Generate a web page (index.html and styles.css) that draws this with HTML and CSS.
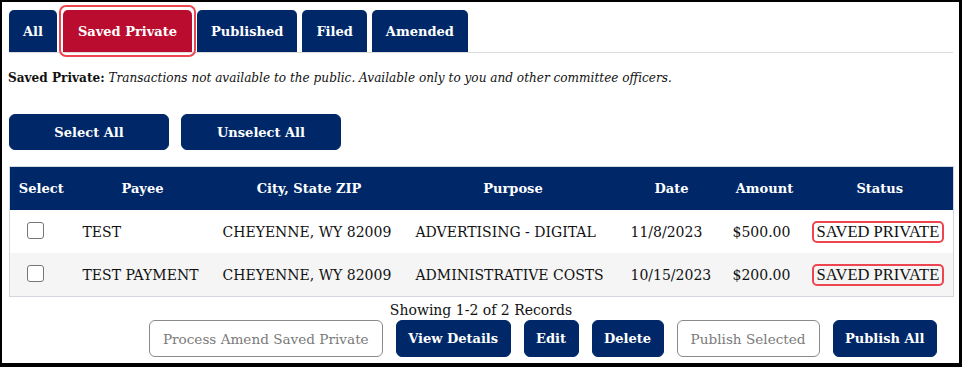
FILE: index.html
```html
<!DOCTYPE html>
<html>
<head>
<meta charset="utf-8">
<link rel="stylesheet" href="styles.css">
</head>
<body>
<div class="frame">
  <nav class="tabs">
    <a class="tab">All</a>
    <a class="tab active">Saved Private</a>
    <a class="tab">Published</a>
    <a class="tab">Filed</a>
    <a class="tab">Amended</a>
  </nav>
  <p class="desc"><b>Saved Private:</b> <i>Transactions not available to the public. Available only to you and other committee officers.</i></p>
  <div class="select-actions">
    <button class="btn btn-wide">Select All</button>
    <button class="btn btn-wide">Unselect All</button>
  </div>
  <table class="grid">
    <colgroup>
      <col class="c-select"><col class="c-payee"><col class="c-city"><col class="c-purpose"><col class="c-date"><col class="c-amount"><col class="c-status">
    </colgroup>
    <thead>
      <tr><th>Select</th><th>Payee</th><th>City, State ZIP</th><th>Purpose</th><th>Date</th><th>Amount</th><th>Status</th></tr>
    </thead>
    <tbody>
      <tr>
        <td class="chk-cell"><span class="chk"></span></td>
        <td>TEST</td>
        <td>CHEYENNE, WY 82009</td>
        <td>ADVERTISING - DIGITAL</td>
        <td>11/8/2023</td>
        <td>$500.00</td>
        <td><span class="badge">SAVED PRIVATE</span></td>
      </tr>
      <tr>
        <td class="chk-cell"><span class="chk"></span></td>
        <td>TEST PAYMENT</td>
        <td>CHEYENNE, WY 82009</td>
        <td>ADMINISTRATIVE COSTS</td>
        <td>10/15/2023</td>
        <td>$200.00</td>
        <td><span class="badge">SAVED PRIVATE</span></td>
      </tr>
    </tbody>
  </table>
  <div class="showing">Showing 1-2 of 2 Records</div>
  <div class="bottom-actions">
    <button class="btn btn-outline">Process Amend Saved Private</button>
    <button class="btn">View Details</button>
    <button class="btn">Edit</button>
    <button class="btn">Delete</button>
    <button class="btn btn-outline">Publish Selected</button>
    <button class="btn">Publish All</button>
  </div>
</div>
</body>
</html>
```

FILE: styles.css
```css
html, body {
  margin: 0;
  padding: 0;
  background: #000;
}
body {
  font-family: "DejaVu Serif", Georgia, serif;
  color: #111;
}
.frame {
  box-sizing: border-box;
  width: 962px;
  height: 367px;
  background: #fff;
  border-style: solid;
  border-color: #000;
  border-width: 2px 3px 4px 2px;
  padding: 8px 6px 0 7px;
}
.tabs {
  display: flex;
  gap: 5px;
  height: 42px;
  border-bottom: 1px solid #dcdcdc;
}
.tab {
  position: relative;
  display: flex;
  align-items: center;
  padding: 0 14px;
  background: #002868;
  color: #fff;
  font-weight: bold;
  font-size: 13px;
  border-radius: 5px 5px 0 0;
}
.tab.active {
  background: #ba0c2f;
  margin-left: 1px;
  padding: 0 15px;
}
.tab.active::after {
  content: "";
  position: absolute;
  left: -4px;
  right: -4px;
  top: -5px;
  bottom: -5px;
  border: 2px solid #ee4650;
  border-radius: 7px;
}
.desc {
  margin: 16px 0 0 -1px;
  font-size: 12.1px;
  line-height: 18px;
}
.desc b { font-weight: bold; }
.select-actions {
  display: flex;
  gap: 12px;
  margin-top: 27px;
}
.btn {
  font-family: "DejaVu Serif", Georgia, serif;
  background: #002868;
  color: #fff;
  border: 1px solid #002868;
  border-radius: 6px;
  height: 37px;
  padding: 0 11.5px;
  font-size: 13px;
  font-weight: bold;
}
.btn-wide {
  width: 160px;
  height: 36px;
}
.btn-outline {
  background: #fff;
  color: #7a7a7a;
  border-color: #8a8a8a;
  font-weight: normal;
  font-size: 13.6px;
  padding: 0 13px;
}
.grid {
  margin-top: 16px;
  width: 944px;
  border-collapse: collapse;
  border: 1px solid #d4d7dd;
  table-layout: fixed;
}
.c-select { width: 63px; }
.c-payee { width: 140px; }
.c-city { width: 193px; }
.c-purpose { width: 215px; }
.c-date { width: 102px; }
.c-amount { width: 84px; }
.c-status { width: 147px; }
.grid th {
  background: #002868;
  color: #fff;
  font-size: 13px;
  font-weight: bold;
  height: 43px;
  padding: 0;
  text-align: center;
}
.grid td {
  height: 43px;
  padding: 0 0 0 10px;
  font-size: 14px;
  white-space: nowrap;
}
.grid tbody tr:nth-child(2) td { background: #f5f5f5; }
.grid td.chk-cell { padding-left: 17px; }
.chk {
  display: block;
  box-sizing: border-box;
  width: 17px;
  height: 17px;
  border: 1px solid #767676;
  border-radius: 3px;
  background: #fff;
  margin-top: -3px;
}
.badge {
  display: inline-block;
  margin-left: -5px;
  padding: 0 3px;
  font-family: "Liberation Serif", "Times New Roman", serif;
  font-size: 16.5px;
  line-height: 18px;
  border: 2px solid #ee4650;
  border-radius: 5px;
}
.showing {
  text-align: center;
  font-size: 14px;
  line-height: 18px;
  margin-top: 4px;
}
.bottom-actions {
  display: flex;
  justify-content: flex-end;
  gap: 13px;
  padding-right: 16px;
  margin-top: 1px;
}
```
